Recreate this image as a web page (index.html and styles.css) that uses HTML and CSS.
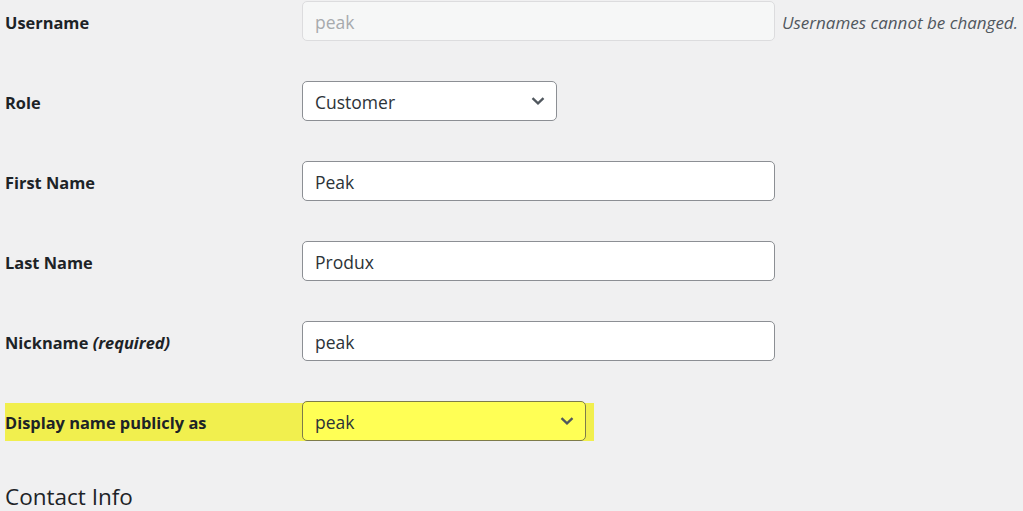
FILE: index.html
```html
<!DOCTYPE html>
<html lang="en">
<head>
<meta charset="utf-8">
<title>Edit User</title>
<link rel="stylesheet" href="styles.css">
</head>
<body>
<form class="profile">
  <div class="row">
    <label class="label" for="user_login">Username</label>
    <div class="field">
      <input id="user_login" class="text wide" type="text" value="peak" disabled>
      <span class="description">Usernames cannot be changed.</span>
    </div>
  </div>

  <div class="row">
    <label class="label" for="role">Role</label>
    <div class="field">
      <div class="select role">
        <span>Customer</span>
        <svg class="chevron" viewBox="0 0 14 8" width="14" height="8"><path d="M1.5 1.2 7 6.4 12.5 1.2" fill="none" stroke="#50575e" stroke-width="2.3"/></svg>
      </div>
    </div>
  </div>

  <div class="row">
    <label class="label" for="first_name">First Name</label>
    <div class="field"><input id="first_name" class="text wide" type="text" value="Peak"></div>
  </div>

  <div class="row">
    <label class="label" for="last_name">Last Name</label>
    <div class="field"><input id="last_name" class="text wide" type="text" value="Produx"></div>
  </div>

  <div class="row">
    <label class="label" for="nickname">Nickname <em>(required)</em></label>
    <div class="field"><input id="nickname" class="text wide" type="text" value="peak"></div>
  </div>

  <div class="row marked">
    <label class="label" for="display_name">Display name publicly as</label>
    <div class="field">
      <div class="select display">
        <span>peak</span>
        <svg class="chevron" viewBox="0 0 14 8" width="14" height="8"><path d="M1.5 1.2 7 6.4 12.5 1.2" fill="none" stroke="#50575e" stroke-width="2.3"/></svg>
      </div>
    </div>
  </div>

  <h2 class="section">Contact Info</h2>
</form>
</body>
</html>
```

FILE: styles.css
```css
html, body {
  margin: 0;
  padding: 0;
  background: #f0f0f1;
}

body {
  font-family: "Open Sans", "Noto Sans", "Liberation Sans", sans-serif;
  color: #1d2327;
}

.profile {
  padding: 1px 0 0 5px;
  width: 1018px;
}

.row {
  display: grid;
  grid-template-columns: 297px 1fr;
  align-items: center;
  height: 40px;
  margin-bottom: 40px;
}

.label {
  padding-top: 2px;
  font-size: 16.4px;
  font-weight: 700;
  color: #1d2327;
}

.label em {
  font-style: italic;
}

.field {
  display: flex;
  align-items: center;
  gap: 7px;
}

.text {
  box-sizing: border-box;
  height: 40px;
  border: 1px solid #8c8f94;
  border-radius: 5px;
  background: #fff;
  padding: 2px 12px 0;
  font-family: inherit;
  font-size: 17.5px;
  color: #2c3338;
  margin: 0;
}

.wide {
  width: 473px;
}

.text:disabled {
  background: #f6f7f7;
  border-color: #dcdcde;
  color: #a7aaad;
}

.description {
  padding-top: 2px;
  font-size: 17px;
  font-style: italic;
  color: #50575e;
  white-space: nowrap;
}

.select {
  box-sizing: border-box;
  height: 40px;
  border: 1px solid #8c8f94;
  border-radius: 5px;
  background: #fff;
  padding: 2px 11px 0 12px;
  display: flex;
  align-items: center;
  justify-content: space-between;
  font-size: 17.5px;
  color: #2c3338;
}

.select .chevron {
  margin-top: -2px;
}

.role {
  width: 255px;
}

.display {
  width: 284px;
  background: #ffff55;
  border-color: #7d7b4a;
}

.marked {
  background: linear-gradient(#f1ef4e, #f1ef4e) no-repeat 0 2px / 589px 38px;
}

.section {
  margin: 1px 0 0;
  font-size: 22.5px;
  font-weight: 500;
  color: #1d2327;
}
```
